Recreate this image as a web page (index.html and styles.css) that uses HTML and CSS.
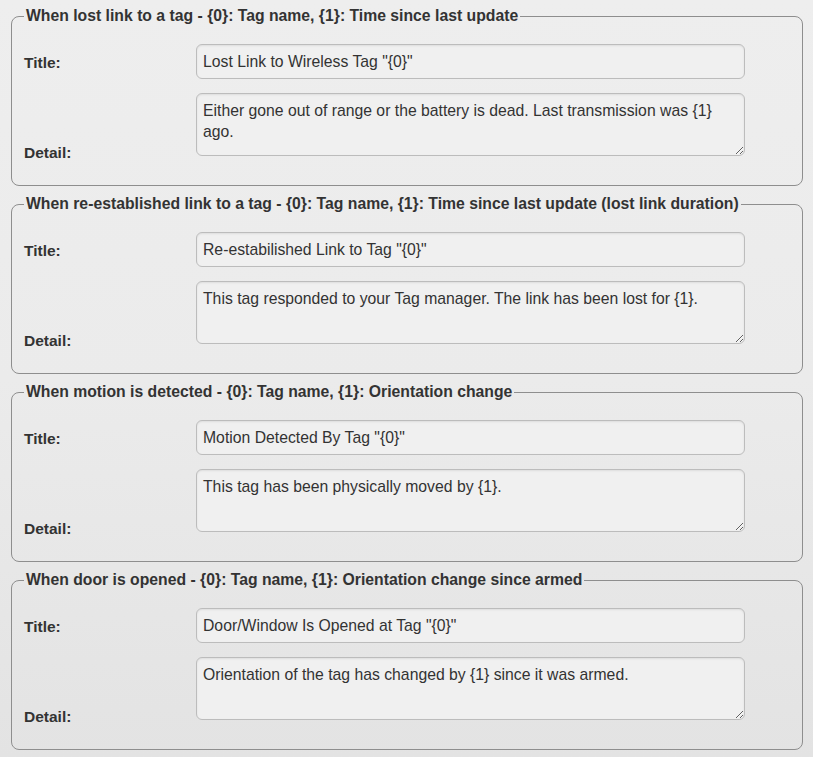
FILE: index.html
```html
<!DOCTYPE html>
<html lang="en">
<head>
<meta charset="utf-8">
<title>Notification templates</title>
<link rel="stylesheet" href="styles.css">
</head>
<body>
<div class="page">
  <fieldset class="group">
    <legend>When lost link to a tag - {0}: Tag name, {1}: Time since last update</legend>
    <div class="form">
      <label class="lbl lbl-title">Title:</label>
      <input class="field" type="text" value="Lost Link to Wireless Tag &quot;{0}&quot;">
      <label class="lbl lbl-detail">Detail:</label>
      <textarea class="area">Either gone out of range or the battery is dead. Last transmission was {1} ago.</textarea>
    </div>
  </fieldset>
  <fieldset class="group">
    <legend>When re-established link to a tag - {0}: Tag name, {1}: Time since last update (lost link duration)</legend>
    <div class="form">
      <label class="lbl lbl-title">Title:</label>
      <input class="field" type="text" value="Re-estabilished Link to Tag &quot;{0}&quot;">
      <label class="lbl lbl-detail">Detail:</label>
      <textarea class="area">This tag responded to your Tag manager. The link has been lost for {1}.</textarea>
    </div>
  </fieldset>
  <fieldset class="group">
    <legend>When motion is detected - {0}: Tag name, {1}: Orientation change</legend>
    <div class="form">
      <label class="lbl lbl-title">Title:</label>
      <input class="field" type="text" value="Motion Detected By Tag &quot;{0}&quot;">
      <label class="lbl lbl-detail">Detail:</label>
      <textarea class="area">This tag has been physically moved by {1}.</textarea>
    </div>
  </fieldset>
  <fieldset class="group">
    <legend>When door is opened - {0}: Tag name, {1}: Orientation change since armed</legend>
    <div class="form">
      <label class="lbl lbl-title">Title:</label>
      <input class="field" type="text" value="Door/Window Is Opened at Tag &quot;{0}&quot;">
      <label class="lbl lbl-detail">Detail:</label>
      <textarea class="area">Orientation of the tag has changed by {1} since it was armed.</textarea>
    </div>
  </fieldset>
</div>
</body>
</html>
```

FILE: styles.css
```css
html, body {
  margin: 0;
  padding: 0;
}

body {
  min-height: 757px;
  background: linear-gradient(to bottom, #eeeeee 0%, #ebebeb 50%, #e3e3e3 100%);
  font-family: "Liberation Sans", Arial, Helvetica, sans-serif;
  color: #333333;
}

.page {
  padding: 7px 0 0 11px;
  display: flex;
  flex-direction: column;
  gap: 9px;
}

.group {
  box-sizing: border-box;
  width: 792px;
  margin: 0;
  padding: 19px 12px 24px 12px;
  border: 1px solid #8e8e8e;
  border-radius: 8px;
  min-width: 0;
}

.group legend {
  padding: 0 2px;
  font-size: 15.75px;
  font-weight: bold;
  line-height: 18px;
  color: #333333;
}

.form {
  display: grid;
  grid-template-columns: 172px 549px;
  grid-template-rows: 35px 68px;
  row-gap: 14px;
}

.lbl {
  font-size: 15.5px;
  font-weight: bold;
  line-height: 17px;
  color: #333333;
}

.lbl-title {
  align-self: center;
  padding-top: 2px;
}

.lbl-detail {
  align-self: end;
}

.field,
.area {
  box-sizing: border-box;
  width: 549px;
  margin: 0;
  border: 1px solid #bcbcbc;
  border-radius: 6px;
  background: #f0f0f0;
  box-shadow: inset 0 1px 2px rgba(0, 0, 0, 0.08);
  font-family: "Liberation Sans", Arial, Helvetica, sans-serif;
  font-size: 15.75px;
  line-height: 21px;
  color: #333333;
  padding: 6px 6px;
  outline: none;
}

.field {
  height: 35px;
}

.area {
  height: 63px;
  align-self: start;
  overflow: hidden;
  resize: both;
}
```
